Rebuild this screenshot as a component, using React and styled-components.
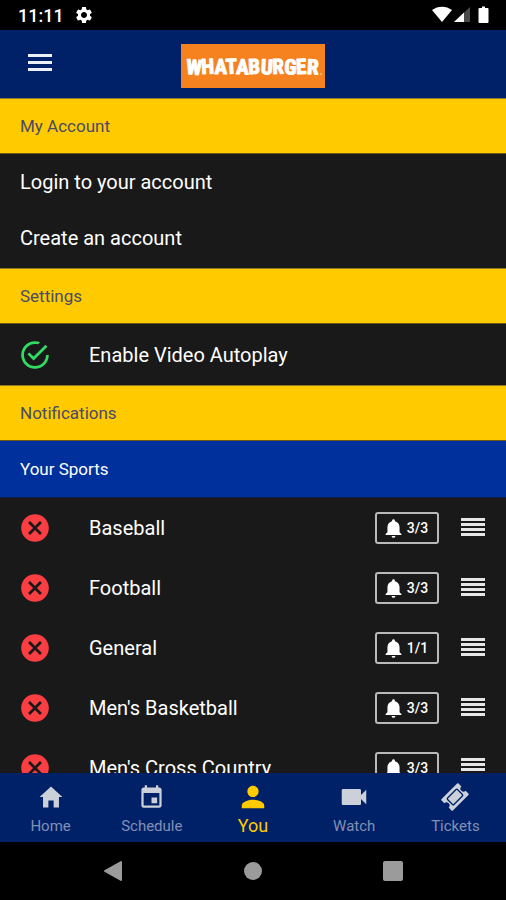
import React from "react";

import styled, { createGlobalStyle } from "styled-components";
import {
    IoMdCheckmarkCircleOutline,
    IoMdCloseCircle,
    IoMdHome,
    IoMdNotifications,
    IoMdPerson,
    IoMdVideocam,
} from "react-icons/io";
import { MdEvent, MdSettings } from "react-icons/md";

const color = {
    navy: "#002168",
    blue: "#00309b",
    yellow: "#ffcb00",
    dark: "#191919",
    red: "#fb3e41",
    green: "#32db64",
    orange: "#f5821f",
    grey: "#9b9b9b",
};

const TicketIcon = ({ size }) => (
    <svg width={size} height={size} viewBox="0 0 26 26" fill="currentColor">
        <path d="M2 5h22q1 0 1 1v4a3 3 0 0 0 0 6v4q0 1-1 1H2q-1 0-1-1v-4a3 3 0 0 0 0-6V6q0-1 1-1z" />
        <rect
            x="6"
            y="8.500"
            width="14"
            height="9"
            rx="1"
            fill="none"
            stroke={color.navy}
            strokeWidth="1.300"
        />
    </svg>
);

const sports = [
    { name: "Baseball", alerts: "3/3" },
    { name: "Football", alerts: "3/3" },
    { name: "General", alerts: "1/1" },
    { name: "Men's Basketball", alerts: "3/3" },
    { name: "Men's Cross Country", alerts: "3/3" },
];

const tabs = [
    { label: "Home", Icon: IoMdHome, size: 28 },
    { label: "Schedule", Icon: MdEvent, size: 27 },
    { label: "You", Icon: IoMdPerson, size: 30, active: true },
    { label: "Watch", Icon: IoMdVideocam, size: 28 },
    { label: "Tickets", Icon: TicketIcon, size: 26, tilted: true },
];

const Bars = ({ count, gap, thickness, fill }) => (
    <svg
        width="24"
        height={(count - 1) * gap + thickness}
        fill={fill}
        aria-hidden="true"
    >
        {Array.from({ length: count }, (_, i) => (
            <rect key={i} y={i * gap} width="24" height={thickness} />
        ))}
    </svg>
);

const StatusIcons = () => (
    <svg width="58" height="18" viewBox="0 0 58 18" fill="#fff" aria-hidden="true">
        <path d="M0 4C6-.5 14-.5 20 4L10 16z" />
        <path d="M38 1v15H22z" fill="#4a4a4a" />
        <path d="M32 6.600V16H22z" />
        <path d="M47.500 2H50V.5h3V2h2.500q1 0 1 1v13q0 1-1 1h-8q-1 0-1-1V3q0-1 1-1z" />
    </svg>
);

const Logo = () => (
    <LogoSvg width="144" height="44" viewBox="0 0 144 44">
        <rect width="144" height="44" />
        <LogoText x="71" y="30" textAnchor="middle" rotate="4 -2 0 -3 2 -2 3 -2 3 -2 3">
            WHATABURGER
        </LogoText>
        <circle cx="140" cy="30" r="1" />
    </LogoSvg>
);

const App = () => {
    return (
        <Screen>
            <GlobalStyle />
            <StatusBar>
                <Clock>11:11</Clock>
                <MdSettings size={20} />
                <StatusRight>
                    <StatusIcons />
                </StatusRight>
            </StatusBar>
            <Header>
                <MenuButton aria-label="Menu">
                    <Bars count={3} gap={7} thickness={3} fill="#eef0f8" />
                </MenuButton>
                <Logo />
            </Header>
            <Content>
                <SectionTitle>My Account</SectionTitle>
                <Links>
                    <LinkRow href="#login">Login to your account</LinkRow>
                    <LinkRow href="#create">Create an account</LinkRow>
                </Links>
                <SectionTitle>Settings</SectionTitle>
                <SettingButton aria-pressed="true">
                    <RowIcon $color={color.green}>
                        <IoMdCheckmarkCircleOutline size={34} />
                    </RowIcon>
                    Enable Video Autoplay
                </SettingButton>
                <SectionTitle>Notifications</SectionTitle>
                <SectionTitle $blue>Your Sports</SectionTitle>
                <SportList>
                    {sports.map(({ name, alerts }) => (
                        <SportRow key={name}>
                            <RemoveButton aria-label={`Remove ${name}`}>
                                <IoMdCloseCircle size={34} />
                            </RemoveButton>
                            <SportName>{name}</SportName>
                            <AlertButton aria-label={`${name} alerts ${alerts}`}>
                                <IoMdNotifications size={23} />
                                {alerts}
                            </AlertButton>
                            <ReorderButton aria-label={`Reorder ${name}`}>
                                <Bars count={4} gap={5} thickness={3} fill="#e6e6e6" />
                            </ReorderButton>
                        </SportRow>
                    ))}
                </SportList>
            </Content>
            <TabBar>
                {tabs.map(({ label, Icon, size, active, tilted }) => (
                    <Tab key={label} href={`#${label.toLowerCase()}`} $active={active}>
                        <TabIcon $tilted={tilted}>
                            <Icon size={size} />
                        </TabIcon>
                        {label}
                    </Tab>
                ))}
            </TabBar>
            <SystemBar>
                <SystemButton aria-label="Back">
                    <svg width="20" height="22" viewBox="0 0 20 22">
                        <path d="M18 2v18L2 11z" />
                    </svg>
                </SystemButton>
                <SystemButton aria-label="Home screen">
                    <svg width="20" height="20">
                        <circle cx="10" cy="10" r="9" />
                    </svg>
                </SystemButton>
                <SystemButton aria-label="Recent apps">
                    <svg width="20" height="20">
                        <rect width="20" height="20" rx="2" />
                    </svg>
                </SystemButton>
            </SystemBar>
        </Screen>
    );
};

export default App;

const GlobalStyle = createGlobalStyle`
    * {
        box-sizing: border-box;
    }

    body {
        margin: 0;
        background-color: #000;
        font-family: Roboto, "Liberation Sans", sans-serif;
    }

    svg {
        display: block;
    }

    a {
        text-decoration: none;
    }

    button {
        padding: 0;
        border: none;
        background: none;
        color: inherit;
        font-family: inherit;
        cursor: pointer;
    }
`;

const Screen = styled.div`
    display: flex;
    flex-direction: column;
    height: 100vh;
    background-color: ${color.dark};
    color: #fff;
`;

const StatusBar = styled.div`
    display: flex;
    align-items: center;
    gap: 10px;
    height: 30px;
    flex-shrink: 0;
    padding: 0 16px 0 18px;
    background-color: #000;
`;

const Clock = styled.span`
    font-size: 18px;
    font-weight: 500;
`;

const StatusRight = styled.div`
    margin-left: auto;
`;

const Header = styled.header`
    display: grid;
    grid-template-columns: 1fr auto 1fr;
    align-items: start;
    height: 68px;
    flex-shrink: 0;
    padding: 14px 28px 0;
    background-color: ${color.navy};
`;

const MenuButton = styled.button`
    justify-self: start;
    padding: 10px 0;
`;

const LogoSvg = styled.svg`
    fill: ${color.orange};

    circle {
        fill: #fbc08c;
    }
`;

const LogoText = styled.text`
    fill: #fff;
    stroke: #fff;
    stroke-width: 1px;
    stroke-linejoin: round;
    font-family: "Roboto Condensed", "Liberation Sans Narrow", Lato, sans-serif;
    font-size: 21px;
    font-weight: 700;
`;

const Content = styled.main`
    flex: 1;
    min-height: 0;
    overflow-y: auto;
    scrollbar-width: none;
`;

const SectionTitle = styled.h2`
    display: flex;
    align-items: center;
    height: ${({ $blue }) => ($blue ? "57px" : "56px")};
    margin: 0;
    padding: 0 20px;
    border-top: ${({ $blue }) => ($blue ? "none" : "1px solid #8f7727")};
    border-bottom: 1px solid ${({ $blue }) => ($blue ? "#10204c" : "#6b5a14")};
    background-color: ${({ $blue }) => ($blue ? color.blue : color.yellow)};
    color: ${({ $blue }) => ($blue ? "#fff" : "#4a4a6a")};
    font-size: 17px;
    font-weight: 400;
`;

const Links = styled.div`
    padding-bottom: 2px;
`;

const LinkRow = styled.a`
    display: flex;
    align-items: center;
    height: 56px;
    padding: 0 20px;
    color: #fff;
    font-size: 20px;
`;

const SettingButton = styled.button`
    display: flex;
    align-items: center;
    width: 100%;
    height: 61px;
    padding: 0 18px;
    font-size: 20px;
    text-align: left;
`;

const RowIcon = styled.span`
    width: 71px;
    color: ${({ $color }) => $color};
`;

const SportList = styled.ul`
    margin: 0;
    padding: 0;
    list-style: none;
`;

const SportRow = styled.li`
    display: flex;
    align-items: center;
    height: 60px;
    padding: 0 21px 0 18px;
`;

const RemoveButton = styled.button`
    width: 71px;
    color: ${color.red};
`;

const SportName = styled.span`
    flex: 1;
    font-size: 20px;
`;

const AlertButton = styled.button`
    display: flex;
    align-items: center;
    justify-content: center;
    gap: 2px;
    width: 64px;
    height: 32px;
    padding-right: 4px;
    border: 2px solid #b9b9b9;
    border-radius: 3px;
    font-size: 14px;
    font-weight: 500;
`;

const ReorderButton = styled.button`
    margin-left: 22px;
    padding-bottom: 3px;
    cursor: grab;
`;

const TabBar = styled.nav`
    display: flex;
    height: 69px;
    flex-shrink: 0;
    background-color: ${color.navy};
`;

const Tab = styled.a`
    display: flex;
    flex: 1;
    flex-direction: column;
    align-items: center;
    padding-top: 7px;
    color: ${({ $active }) => ($active ? color.yellow : "#8290b4")};
    font-size: ${({ $active }) => ($active ? "18px" : "15px")};
    line-height: 24px;

    svg {
        color: ${({ $active }) => ($active ? color.yellow : "#ccd0d8")};
    }
`;

const TabIcon = styled.span`
    display: flex;
    align-items: center;
    height: 34px;
    transform: ${({ $tilted }) => ($tilted ? "rotate(-45deg)" : "none")};
`;

const SystemBar = styled.div`
    display: flex;
    align-items: center;
    justify-content: center;
    gap: 120px;
    height: 58px;
    flex-shrink: 0;
    background-color: #000;
`;

const SystemButton = styled.button`
    svg {
        fill: ${color.grey};
    }

    path {
        stroke: ${color.grey};
        stroke-width: 2px;
        stroke-linejoin: round;
    }
`;
